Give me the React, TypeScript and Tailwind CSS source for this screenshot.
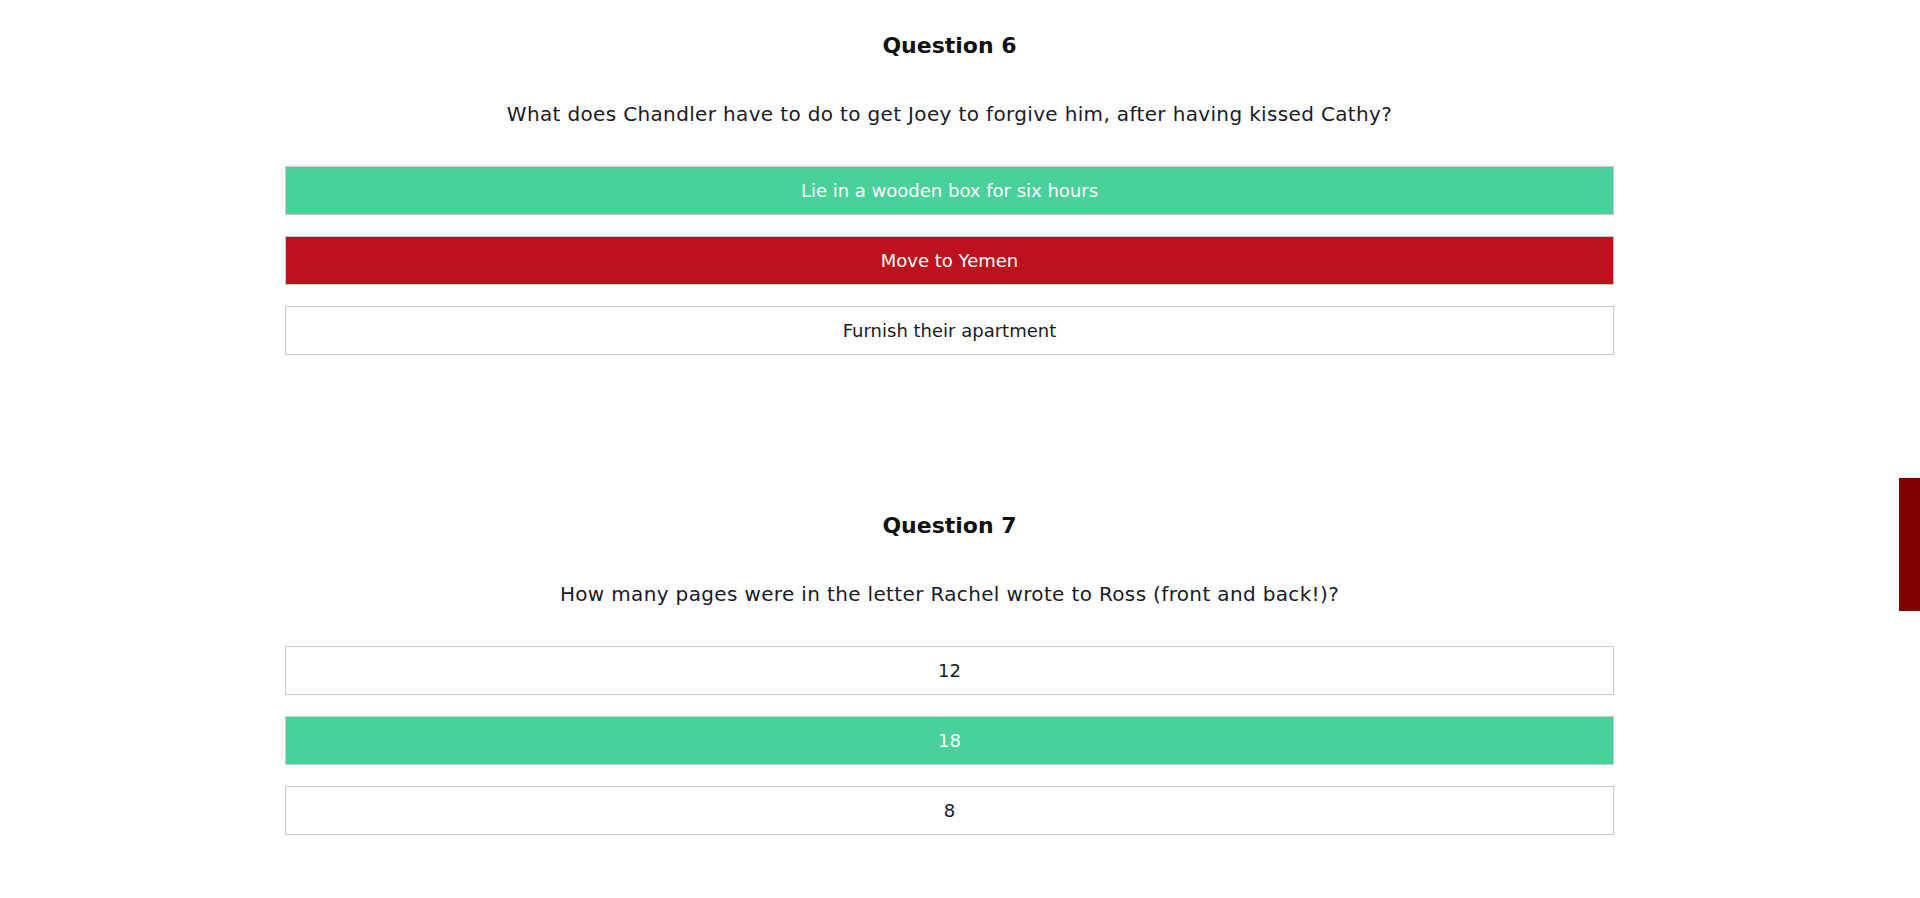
const questions = [
  {
    title: 'Question 6',
    text: 'What does Chandler have to do to get Joey to forgive him, after having kissed Cathy?',
    answers: [
      { label: 'Lie in a wooden box for six hours', state: 'correct' },
      { label: 'Move to Yemen', state: 'wrong' },
      { label: 'Furnish their apartment', state: 'idle' },
    ],
  },
  {
    title: 'Question 7',
    text: 'How many pages were in the letter Rachel wrote to Ross (front and back!)?',
    answers: [
      { label: '12', state: 'idle' },
      { label: '18', state: 'correct' },
      { label: '8', state: 'idle' },
    ],
  },
]

const answerClass = (state: string) => {
  if (state === 'correct') return 'bg-[#49d19a] text-white'
  if (state === 'wrong') return 'bg-[#bf111b] text-white'
  return 'bg-white text-[#1a1a1a]'
}

const App = () => {
  return (
    <div className="flex h-[898px] w-full overflow-hidden bg-white font-['DejaVu_Sans',sans-serif]">
      <div className="flex-1">
        {questions.map((q) => (
          <section key={q.title} className="mx-auto flex h-[480px] w-[70%] flex-col items-center pt-[31px]">
            <h2 className="text-[22px] font-bold leading-[30px] text-[#111]">{q.title}</h2>
            <p className="mt-[39px] text-[20px] leading-[28px] tracking-[0.35px] text-[#1a1a2a]">{q.text}</p>
            <div className="mt-[38px] flex w-full flex-col gap-[21px]">
              {q.answers.map((a) => (
                <button
                  key={a.label}
                  className={`h-[49px] w-full border border-[#c9c9c9] text-[18px] ${answerClass(a.state)}`}
                >
                  {a.label}
                </button>
              ))}
            </div>
          </section>
        ))}
      </div>
      <div className="w-[21px] bg-white pt-[478px]">
        <div className="h-[133px] w-full bg-[#800000]" />
      </div>
    </div>
  )
}

export default App
